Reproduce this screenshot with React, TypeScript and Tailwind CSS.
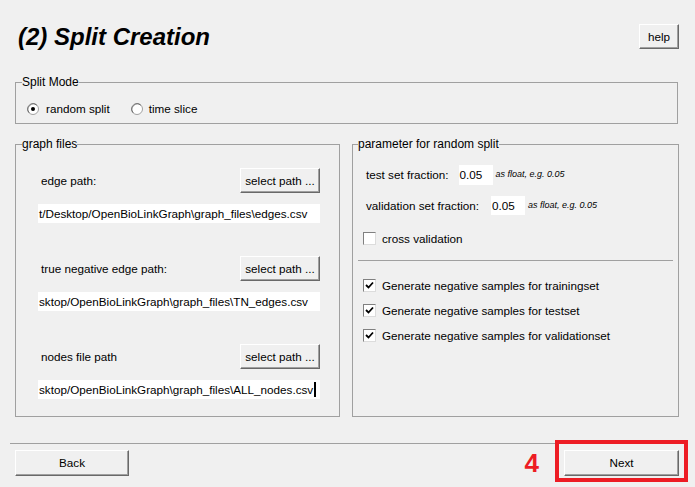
import React from "react";

function Btn({ children, className = "" }: { children: React.ReactNode; className?: string }) {
  return (
    <div
      className={
        "flex items-center justify-center bg-[#f0f0f0] border border-t-white border-l-white border-r-[#696969] border-b-[#696969] shadow-[inset_-1px_-1px_0_#a0a0a0] text-black " +
        className
      }
    >
      {children}
    </div>
  );
}

function Radio({ checked }: { checked?: boolean }) {
  return (
    <svg width="12" height="12" viewBox="0 0 12 12" className="shrink-0">
      <circle cx="6" cy="6" r="5.5" fill="#ffffff" stroke="#a0a0a0" />
      <path d="M2.2 9.8 A5.4 5.4 0 0 1 9.8 2.2" fill="none" stroke="#696969" strokeWidth="1" />
      {checked && <circle cx="6" cy="6" r="2" fill="#000" />}
    </svg>
  );
}

function Check({ checked }: { checked?: boolean }) {
  return (
    <div className="w-[13px] h-[13px] shrink-0 bg-white border border-t-[#808080] border-l-[#808080] border-r-[#dcdcdc] border-b-[#dcdcdc] flex items-center justify-center">
      {checked && (
        <svg width="9" height="9" viewBox="0 0 9 9">
          <path d="M1 4 L3.5 6.5 L8 1.5" fill="none" stroke="#000" strokeWidth="1.8" />
        </svg>
      )}
    </div>
  );
}

function PathRow({ label, value, cursor }: { label: string; value: string; cursor?: boolean }) {
  return (
    <div className="flex flex-col">
      <div className="flex items-center justify-between h-[25px] pl-[25px] pr-[19px]">
        <span>{label}</span>
        <Btn className="w-[80px] h-[25px]">select path ...</Btn>
      </div>
      <div className="mt-[11px] ml-[22px] w-[282px] h-[19px] bg-white flex items-center pl-[1px] overflow-hidden whitespace-nowrap">
        <span>{value}</span>
        {cursor && <span className="ml-[1px] w-[2px] h-[15px] bg-black shrink-0" />}
      </div>
    </div>
  );
}

export default function App() {
  return (
    <div
      className="relative w-[695px] h-[487px] bg-[#f0f0f0] text-[11.7px] text-black overflow-hidden"
      style={{ fontFamily: '"Liberation Sans", Arial, sans-serif' }}
    >
      {/* Header */}
      <div className="flex items-start justify-between pl-[18px] pr-[16px] pt-[23px] h-[76px]">
        <h1 className="text-[24px] leading-[28px] font-bold italic">(2) Split Creation</h1>
        <Btn className="w-[40px] h-[25px] mt-[1px]">help</Btn>
      </div>

      {/* Split Mode */}
      <fieldset className="mx-[15px] w-[663px] h-[48px] border border-[#a0a0a0] px-0 pb-0 relative">
        <legend className="ml-[6px] px-0 leading-[12px] text-[12px]">Split Mode</legend>
        <div className="flex items-center h-[22px] pl-[11px] mt-[10px]">
          <Radio checked />
          <span className="ml-[7px]">random split</span>
          <span className="ml-[21px]"><Radio /></span>
          <span className="ml-[6px]">time slice</span>
        </div>
      </fieldset>

      {/* Columns */}
      <div className="flex mt-[14px] px-[15px] gap-[12px]">
        <fieldset className="w-[325px] h-[279px] border border-[#a0a0a0] px-0 pb-0">
          <legend className="ml-[6px] px-0 leading-[12px] text-[12px]">graph files</legend>
          <div className="flex flex-col mt-[18px] gap-[33px]">
            <PathRow label="edge path:" value="t/Desktop/OpenBioLinkGraph\graph_files\edges.csv" />
            <PathRow label="true negative edge path:" value="sktop/OpenBioLinkGraph\graph_files\TN_edges.csv" />
            <PathRow label="nodes file path" value="sktop/OpenBioLinkGraph\graph_files\ALL_nodes.csv" cursor />
          </div>
        </fieldset>

        <fieldset className="w-[327px] h-[279px] border border-[#a0a0a0] px-0 pb-0">
          <legend className="ml-[5px] px-0 leading-[12px] text-[12px]">parameter for random split</legend>
          <div className="flex flex-col mt-[15px]">
            <div className="flex items-center h-[20px] pl-[13px]">
              <span>test set fraction:</span>
              <div className="ml-[10px] w-[34px] h-[20px] bg-white flex items-center pl-[1px]">0.05</div>
              <span className="ml-[3px] text-[9px] italic">as float, e.g. 0.05</span>
            </div>
            <div className="flex items-center h-[19px] pl-[13px] mt-[11px]">
              <span>validation set fraction:</span>
              <div className="ml-[12px] w-[34px] h-[19px] bg-white flex items-center pl-[1px]">0.05</div>
              <span className="ml-[3px] text-[9px] italic">as float, e.g. 0.05</span>
            </div>
            <div className="flex items-center h-[13px] pl-[10px] mt-[17px]">
              <Check />
              <span className="ml-[6px]">cross validation</span>
            </div>
            <div className="mx-[5px] mt-[15px] h-[1px] bg-[#a0a0a0]" />
            <div className="flex flex-col gap-[12px] mt-[18px]">
              {["trainingset", "testset", "validationset"].map((s) => (
                <div key={s} className="flex items-center h-[13px] pl-[10px]">
                  <Check checked />
                  <span className="ml-[6px]">Generate negative samples for {s}</span>
                </div>
              ))}
            </div>
          </div>
        </fieldset>
      </div>

      {/* Bottom separator */}
      <div className="mx-[10px] mt-[26px] h-[1px] bg-[#a0a0a0]" />

      {/* Bottom buttons */}
      <div className="flex items-center justify-between pl-[15px] pr-[16px] mt-[6px]">
        <Btn className="w-[114px] h-[26px]">Back</Btn>
        <div className="flex items-center">
          <span className="text-[26px] font-bold text-[#ed1c24] leading-[26px] mr-[25px]">4</span>
          <div className="relative">
            <Btn className="w-[115px] h-[26px]">Next</Btn>
            <div className="absolute -left-[9px] -top-[10px] w-[133px] h-[42px] border-[4px] border-[#ed1c24]" />
          </div>
        </div>
      </div>
    </div>
  );
}
